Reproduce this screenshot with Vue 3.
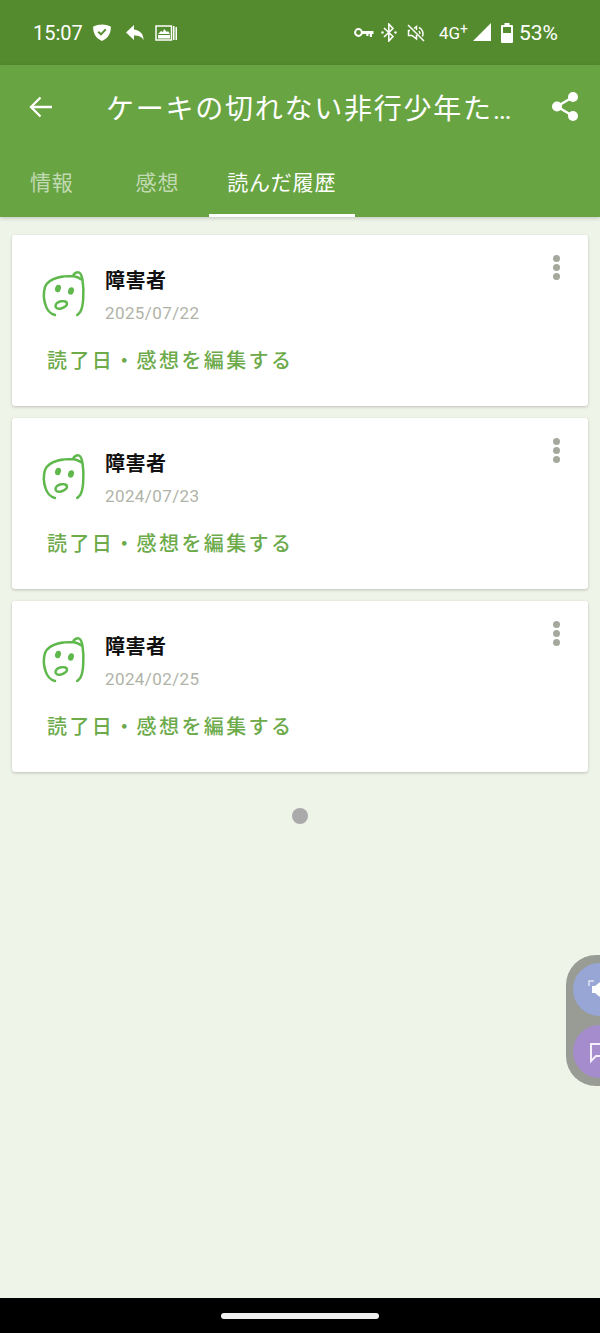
<template>
  <div class="screen">
    <header class="status-bar">
      <span class="time">15:07</span>
      <svg class="ic" width="20" height="20" viewBox="0 0 20 20"><path fill="#fff" fill-rule="evenodd" d="M10 1.500c3 0 6 .8 8.800 2 .3 6.500-2.500 11.800-8.800 14.500C3.700 15.300.9 10 1.200 3.500c2.800-1.200 5.800-2 8.800-2zM14.500 7l-1.500-1.300-4 4.300-2-1.900-1.400 1.300 3.400 3.400z"/></svg>
      <svg class="ic reply" width="22" height="20" viewBox="0 0 22 20"><path fill="#fff" d="M9 2 1 9.500 9 17v-4.500c4.500 0 7.500 1 9.500 4.500 0-6-3-9.500-9.500-10.500z"/></svg>
      <svg class="ic news" width="22" height="18" viewBox="0 0 22 18"><path fill="none" stroke="#fff" stroke-width="1.500" d="M1 2h15.500v14H1z"/><path fill="#fff" d="M3 10l3-3 2 1 1-3 3 3 1-1 2 3zM3 11h12v3.500H3zM18 2h1.500v14H18zM20.500 3H22v13h-1.500z"/></svg>
      <span class="spacer"></span>
      <svg class="ic key" width="20" height="12" viewBox="0 0 20 12"><circle cx="4.500" cy="5.500" r="3.400" fill="none" stroke="#fff" stroke-width="2"/><path fill="#fff" d="M8 4h11.500v3H18v3h-2.200V7h-1.300v2h-2.200V7H8z"/></svg>
      <svg class="ic bt" width="16" height="19" viewBox="0 0 16 19"><path fill="none" stroke="#fff" stroke-width="1.600" d="M3 5l9 8.500-4.200 4.500V1l4.200 4.500L3 14"/><circle cx="1.500" cy="9.500" r="1.200" fill="#fff"/><circle cx="14.500" cy="9.500" r="1.200" fill="#fff"/></svg>
      <svg class="ic mute" width="20" height="18" viewBox="0 0 20 18"><path fill="none" stroke="#fff" stroke-width="1.500" d="M1 1l16 16M3 6.500H1.500v5H5l4.500 3.500V11M9.500 6V2.500L7 4.500M12 3.500c3.500 1.500 5 6 3.500 9M11.800 7c1 .8 1.300 1.800 1 3"/></svg>
      <span class="net">4G<sup>+</sup></span>
      <svg class="ic signal" width="19" height="19" viewBox="0 0 19 19"><path fill="#fff" d="M19 0v18H1z"/></svg>
      <svg class="ic battery" width="12" height="20" viewBox="0 0 12 20"><path fill="#fff" fill-rule="evenodd" d="M3.500 0h5v2H11a1 1 0 0 1 1 1v16a1 1 0 0 1-1 1H1a1 1 0 0 1-1-1V3a1 1 0 0 1 1-1h2.500zM2 4v6h8V4z"/></svg>
      <span class="pct">53%</span>
    </header>

    <div class="app-bar">
      <div class="toolbar">
        <svg class="back" width="26" height="24" viewBox="0 0 26 24"><path fill="none" stroke="#fff" stroke-width="2.300" d="M24 12H3M12.500 2.500 3 12l9.500 9.500"/></svg>
        <h1 class="title">ケーキの切れない非行少年た…</h1>
        <svg class="share" width="28" height="31" viewBox="0 0 28 31"><path fill="none" stroke="#fff" stroke-width="2.500" d="M22 6 6 15.500 22 25"/><circle cx="22" cy="6" r="5" fill="#fff"/><circle cx="6" cy="15.500" r="5" fill="#fff"/><circle cx="22" cy="25" r="5" fill="#fff"/></svg>
      </div>
      <nav class="tabs">
        <span v-for="tab in tabs" :key="tab.label" class="tab" :class="{ active: tab.active }">{{ tab.label }}</span>
      </nav>
    </div>

    <main class="list">
      <article v-for="item in history" :key="item.date" class="card">
        <div class="card-top">
          <svg class="face" width="48" height="50" viewBox="0 0 48 50">
            <path fill="none" stroke="#5fb84c" stroke-width="2.500" stroke-linecap="round" stroke-linejoin="round" d="M15 47C11 46 7 42 5.500 37 3.500 31 3.500 24 5 19 7 14 12 11 18 9.500 24 8 29 8 33 8 34 5.500 37 3.500 39 4.500 41 5.500 42 9 42.500 12c1 6 1.200 13 .7 19-.3 5-1.200 10-3 13-1 1.200-2 2.200-3 3M33 8c4 .5 6.500 2 9.500 4"/>
            <ellipse cx="18" cy="20.500" rx="2.900" ry="3.800" fill="#5fb84c" transform="rotate(15 18 20.500)"/>
            <ellipse cx="31" cy="23" rx="2.900" ry="3.800" fill="#5fb84c" transform="rotate(15 31 23)"/>
            <path fill="none" stroke="#5fb84c" stroke-width="2.500" d="M15.500 38c0-2.500 3-4.500 6-4.800 3-.3 5.500.3 5.500 2.500 0 2-3 3.800-6 4.800-3 .7-5.500 0-5.500-2.500z"/>
          </svg>
          <div class="meta">
            <h2 class="name">{{ item.name }}</h2>
            <p class="date">{{ item.date }}</p>
          </div>
          <div class="more"><i></i><i></i><i></i></div>
        </div>
        <a class="edit">読了日・感想を編集する</a>
      </article>
      <div class="dot-row"><span class="dot"></span></div>
    </main>

    <footer class="nav-bar"><span class="handle"></span></footer>

    <aside class="float">
      <div class="bubble blue">
        <svg width="26" height="30" viewBox="0 0 26 30"><path fill="none" stroke="#dfe4f2" stroke-width="1.500" d="M1 11V6h5"/><path fill="#fff" d="M4 11h3l5-4v15l-5-4H4z"/></svg>
      </div>
      <div class="bubble purple">
        <svg width="26" height="30" viewBox="0 0 26 30"><path fill="none" stroke="#f4effa" stroke-width="2" d="M3 7h22v12H8l-5 5z"/></svg>
      </div>
    </aside>
  </div>
</template>

<script setup>
const tabs = [
  { label: '情報' },
  { label: '感想' },
  { label: '読んだ履歴', active: true }
]

const history = [
  { name: '障害者', date: '2025/07/22' },
  { name: '障害者', date: '2024/07/23' },
  { name: '障害者', date: '2024/02/25' }
]
</script>

<style scoped>
.screen { position: relative; height: 1333px; overflow: hidden; background: #eff4e9; display: flex; flex-direction: column; font-family: Roboto, "Noto Sans CJK JP", sans-serif; }
.status-bar { height: 65px; flex: none; background: #558b2f; color: #fff; display: flex; align-items: center; padding: 0 42px 0 33px; box-sizing: border-box; }
.time { font-size: 20px; margin-right: 9px; }
.ic { flex: none; }
.reply { margin-left: 13px; }
.news { margin-left: 8px; }
.spacer { flex: 1; }
.bt { margin-left: 7px; }
.mute { margin-left: 10px; }
.net { font-size: 17px; margin-left: 12px; }
.net sup { font-size: 14px; line-height: 0; vertical-align: 5px; }
.signal { margin-left: 4px; }
.battery { margin-left: 10px; }
.pct { font-size: 21px; margin-left: 6px; }
.app-bar { height: 152px; flex: none; background: #68a442; box-shadow: 0 1px 4px rgba(0,0,0,.2); display: flex; flex-direction: column; position: relative; }
.toolbar { height: 83px; display: flex; align-items: center; padding: 0 21px 0 28px; }
.title { flex: 1; min-width: 0; margin: 0 30px 0 52px; font-size: 28px; font-weight: 400; letter-spacing: 1.750px; color: #fff; white-space: nowrap; }
.tabs { flex: 1; display: flex; padding-left: 12px; }
.tab { padding: 0 19px; margin-right: 24px; font-size: 21px; letter-spacing: .8px; color: rgba(255,255,255,.6); display: flex; align-items: center; border-bottom: 3px solid transparent; box-sizing: border-box; }
.tab:first-child { padding-left: 18px; }
.tab.active { color: #fff; border-bottom-color: #fff; margin-left: -13px; padding-left: 18px; }
.list { flex: 1; padding: 18px 12px 0; display: flex; flex-direction: column; gap: 12px; }
.card { height: 171px; box-sizing: border-box; background: #fff; border-radius: 3px; box-shadow: 0 1px 3px rgba(0,0,0,.22); padding: 32px 24px 0 35px; position: relative; }
.card-top { display: flex; }
.face { margin: 1px 0 0 -7px; flex: none; }
.meta { margin-left: 17px; }
.name { margin: 0; font-size: 20px; font-weight: 700; letter-spacing: .5px; line-height: 28px; color: #111; }
.date { margin: 7px 0 0; font-size: 17px; line-height: 22px; color: #b0b3a8; letter-spacing: .4px; }
.more { position: absolute; top: 20px; right: 28px; display: flex; flex-direction: column; gap: 2px; }
.more i { width: 7px; height: 7px; border-radius: 50%; background: #a5a99d; display: block; }
.edit { display: block; margin-top: 23px; font-size: 20px; font-weight: 500; letter-spacing: 2.400px; color: #6caa4a; line-height: 28px; }
.dot-row { display: flex; justify-content: center; margin-top: 24px; }
.dot { width: 16px; height: 16px; border-radius: 50%; background: #aaa; }
.nav-bar { height: 35px; flex: none; background: #000; display: flex; align-items: center; justify-content: center; }
.handle { width: 158px; height: 6px; border-radius: 3px; background: #f0f0f0; }
.float { position: absolute; left: 566px; top: 955px; width: 60px; height: 131px; border-radius: 30px 0 0 30px; background: #999c94; padding: 8px 0 0 7px; box-sizing: border-box; display: flex; flex-direction: column; gap: 9px; }
.bubble { width: 53px; height: 53px; border-radius: 50%; display: flex; align-items: center; padding-left: 15px; box-sizing: border-box; flex: none; }
.blue { background: #97a6d4; }
.purple { background: #a58ccc; }
</style>

<style>
html, body { margin: 0; padding: 0; }
</style>
